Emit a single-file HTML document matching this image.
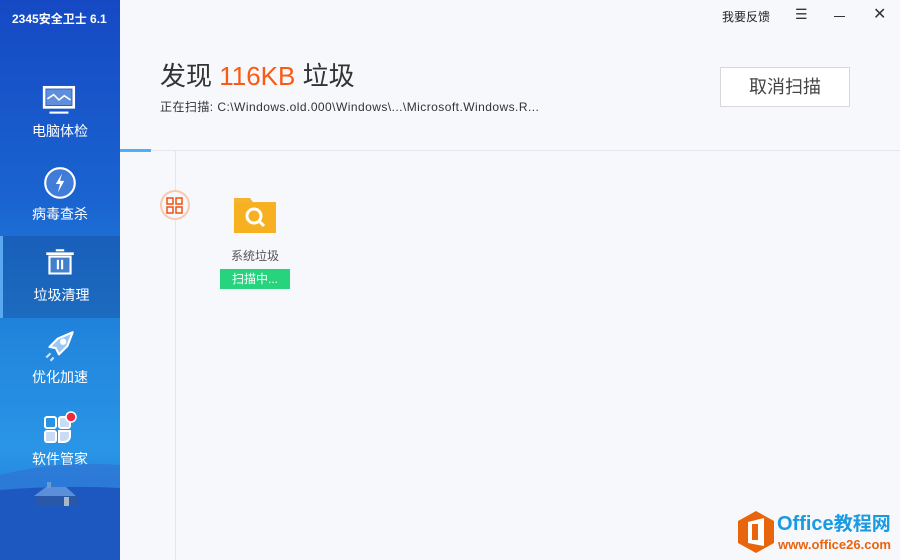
<!DOCTYPE html>
<html><head><meta charset="utf-8"><style>
*{margin:0;padding:0;box-sizing:border-box}
html,body{width:900px;height:560px;overflow:hidden}
body{background:#f7f8fc;font-family:"Liberation Sans","Noto Sans CJK SC",sans-serif;position:relative}
#side{position:absolute;left:0;top:0;width:120px;height:560px;background:linear-gradient(180deg,#1549c4 0%,#1a63d0 35%,#2185dc 60%,#2a95e6 80%,#1d6fd0 100%);overflow:hidden}
.title{position:absolute;left:12px;top:10px;color:#fff;font-size:12px;font-weight:bold;white-space:nowrap}
.item{position:absolute;left:0;width:120px;height:82px;text-align:center;color:#fff;font-size:14px}
.item svg{position:absolute;left:41px;top:10px}
.item span{position:absolute;left:0;right:0;top:49px}
.act{background:rgba(20,70,140,.35);border-left:3px solid #5aa8f0}
.abs{position:absolute;white-space:nowrap}
</style></head><body>
<div id="side">
<div class="title">2345安全卫士 6.1</div>
<div class="item" style="top:72px"><svg width="38" height="38" viewBox="0 0 36 34"><rect x="3" y="4" width="28" height="19" fill="none" stroke="#fff" stroke-width="2.5"/><rect x="5" y="6" width="24" height="15" fill="#8fb4ea" opacity=".6"/><path d="M6 15l6-4 5 5 5-4 6 4" fill="none" stroke="#fff" stroke-width="1.5"/><rect x="8" y="27" width="18" height="2" fill="#fff"/></svg><span>电脑体检</span></div>
<div class="item" style="top:155px"><svg width="38" height="38" viewBox="0 0 36 36"><circle cx="18" cy="17" r="14" fill="#7aa6e6" fill-opacity=".4" stroke="#fff" stroke-width="2"/><path d="M20 8l-6 10h4l-2 8 6-11h-4z" fill="#fff"/></svg><span>病毒查杀</span></div>
<div class="item act" style="top:236px"><svg width="38" height="36" viewBox="0 0 36 34" style="left:38px"><rect x="14" y="3" width="8" height="2" fill="#fff"/><rect x="5" y="6" width="26" height="2.5" fill="#fff"/><path d="M8 10h20v16H8z" fill="#6a9ee0" fill-opacity=".5" stroke="#fff" stroke-width="2"/><rect x="15" y="13" width="2" height="9" fill="#fff"/><rect x="19" y="13" width="2" height="9" fill="#fff"/></svg><span>垃圾清理</span></div>
<div class="item" style="top:318px"><svg width="38" height="38" viewBox="0 0 36 36"><path d="M30 4L16 10 8 18l6 1 3 6 8-8z" fill="#9cc6f4" stroke="#fff" stroke-width="2" stroke-linejoin="round"/><circle cx="21" cy="13" r="3" fill="#fff"/><path d="M5 28l4-4M9 31l3-3" stroke="#cfe3fb" stroke-width="2"/></svg><span>优化加速</span></div>
<div class="item" style="top:400px"><svg width="40" height="38" viewBox="0 0 40 36"><rect x="4" y="6" width="11" height="11" rx="2" fill="none" stroke="#fff" stroke-width="2"/><rect x="18" y="6" width="11" height="11" rx="2" fill="#c8dcf6" stroke="#fff" stroke-width="2"/><rect x="4" y="20" width="11" height="11" rx="2" fill="#c8dcf6" stroke="#fff" stroke-width="2"/><path d="M18 20h11v5a6 6 0 0 1-6 6h-5z" fill="#c8dcf6" stroke="#fff" stroke-width="2"/><circle cx="30" cy="6" r="5" fill="#f2283c" stroke="#fff" stroke-width="1.5"/></svg><span>软件管家</span></div>
<svg class="abs" style="left:0;top:430px" width="120" height="130" viewBox="0 0 120 130"><path d="M0 45 Q60 30 120 35 V130 H0z" fill="#2f74d4" opacity=".7"/><path d="M0 60 Q60 55 120 58 V130 H0z" fill="#1c58c0"/><path d="M34 66l12-9h20l10 9z" fill="#5b8fd8"/><rect x="36" y="66" width="42" height="10" fill="#2a58a8"/><rect x="64" y="67" width="5" height="9" fill="#a8b8c8"/><rect x="47" y="52" width="4" height="6" fill="#6a9ad8"/></svg>
</div>
<div class="abs" style="left:722px;top:8px;font-size:12px;color:#222">我要反馈</div>
<div class="abs" style="left:795px;top:6px;font-size:14px;color:#333">☰</div>
<div class="abs" style="left:834px;top:16px;width:11px;height:1px;background:#333"></div>
<div class="abs" style="left:873px;top:4px;font-size:16px;color:#333">✕</div>
<div class="abs" style="left:160px;top:56px;font-size:26px;color:#333">发现 <span style="color:#fa5a14">116KB</span> 垃圾</div>
<div class="abs" style="left:160px;top:98px;font-size:12px;color:#333;letter-spacing:.45px">正在扫描: C:\Windows.old.000\Windows\...\Microsoft.Windows.R...</div>
<div class="abs" style="left:720px;top:67px;width:130px;height:40px;border:1px solid #d8d8d8;background:#fff;font-size:18px;color:#444;text-align:center;line-height:38px">取消扫描</div>
<div class="abs" style="left:120px;top:150px;width:780px;height:1px;background:#e2e6ee"></div>
<div class="abs" style="left:120px;top:149px;width:31px;height:3px;background:#4db0f5"></div>
<div class="abs" style="left:175px;top:151px;width:1px;height:409px;background:#e2e6ee"></div>
<div class="abs" style="left:160px;top:190px;width:30px;height:30px;border-radius:50%;background:#f7f8fc;border:2px solid #f8c8b0"></div>
<svg class="abs" style="left:166px;top:197px" width="18" height="18" viewBox="0 0 18 18"><g fill="none" stroke="#f05010" stroke-width="1.5"><rect x="1" y="1" width="6" height="6"/><rect x="10" y="1" width="6" height="6"/><rect x="1" y="10" width="6" height="6"/><rect x="10" y="10" width="6" height="6"/></g></svg>
<svg class="abs" style="left:233px;top:195px" width="44" height="40" viewBox="0 0 44 40"><path d="M1 3h16l3 4h23v31H1z" fill="#f4b430"/><rect x="1" y="8" width="42" height="30" fill="#f6b020"/><circle cx="21" cy="21" r="7" fill="none" stroke="#fff" stroke-width="3"/><path d="M26 26l5 5" stroke="#fff" stroke-width="3"/></svg>
<div class="abs" style="left:231px;top:247px;font-size:12px;color:#555">系统垃圾</div>
<div class="abs" style="left:220px;top:269px;width:70px;height:20px;background:#27d47e;color:#fff;font-size:12px;text-align:center;line-height:20px">扫描中...</div>
<svg class="abs" style="left:736px;top:510px" width="40" height="44" viewBox="0 0 40 44"><path d="M20 1l18 10v22L20 43 2 33V11z" fill="#e8650e"/><path d="M12 12l16-4v28l-16-3z" fill="#fff"/><rect x="16" y="14" width="6" height="16" fill="#e8650e"/></svg>
<div class="abs" style="left:777px;top:512px;font-size:20px;font-weight:bold;color:#1a9ae0;line-height:24px">Office<span style="font-size:19px">教程网</span></div>
<div class="abs" style="left:778px;top:537px;font-size:13px;font-weight:bold;color:#e8650e;line-height:16px">www.office26.com</div>
</body></html>
